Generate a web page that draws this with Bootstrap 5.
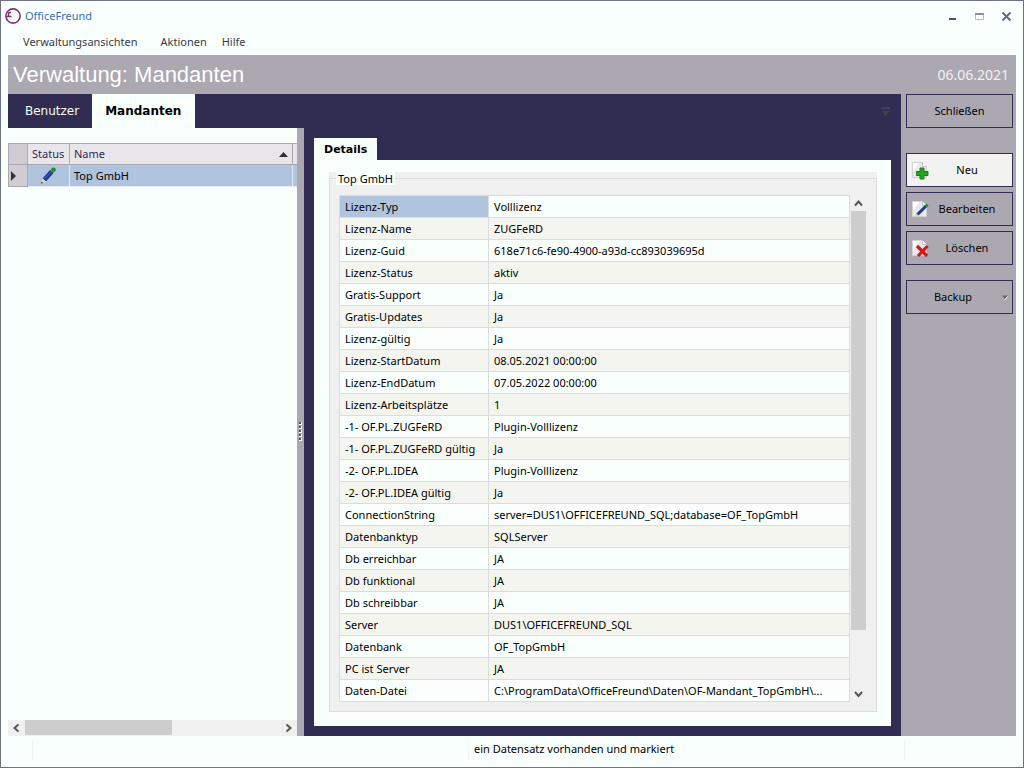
<!DOCTYPE html>
<html lang="de">
<head>
<meta charset="utf-8">
<meta name="viewport" content="width=device-width, initial-scale=1">
<title>OfficeFreund</title>
<link href="https://cdn.jsdelivr.net/npm/bootstrap@5.3.0/dist/css/bootstrap.min.css" rel="stylesheet">
<style>
:root { --paper:#f8fffd; --navy:#312c51; --steel:#aba8b2; --line:#dcdcdc; --face:#f0f0f0; --pick:#b0c4de; }
body { font-family:"Noto Sans","Open Sans",sans-serif; font-size:11px; line-height:16px; color:#000; background:var(--paper); }
.window { height:100vh; min-height:600px; border:1px solid #6f727e; padding:0 7px; }
.titlebar { height:30px; color:#3a6fb5; margin-left:-3px; padding-right:3px; }
.winbtn { border:0; background:none; padding:0; width:13px; height:13px; line-height:0; }
.menubar { height:24px; gap:23px; padding:0 0 2px 15px; }
.menubar a { color:#3b3b47; text-decoration:none; }
.menubar a:last-child { margin-left:-8px; }
.heading { height:39px; background:var(--steel); padding:0 7px 0 5px; }
.heading h1 { font:22px/39px "Liberation Sans",Arial,sans-serif; color:#fff; margin:0; }
.heading time { font-size:14px; color:#f0f0f0; }
.maintabs { background:var(--navy); height:34px; padding-right:11px; }
.tabbtn { border:0; border-radius:0; font-family:"DejaVu Sans",Verdana,sans-serif; font-size:12px; line-height:16px; height:34px; background:var(--navy); color:#f8fffd; padding:0 13px 0 17px; }
.tabbtn.current { background:var(--paper); color:#000; font-weight:bold; padding:0 14px 0 13px; }
.listpane { width:289px; padding-top:15px; }
.listgrid { table-layout:fixed; width:100%; border-collapse:separate; border-spacing:0; }
.listgrid th, .listgrid td { height:22px; padding:0 4px; font-weight:normal; white-space:nowrap; }
.listgrid th { background:#e9e6ea; color:#2d2850; border:solid var(--steel); border-width:1px 1px 1px 0; }
.listgrid tr > :first-child { background:#d0ccd2; border:solid var(--steel); border-width:0 1px 1px; }
.listgrid thead tr > :first-child { border-top-width:1px; }
.listgrid th:last-child { border-right:0; }
.listgrid td { background:var(--pick); border:solid #e6e6f6; border-width:0 1px 1px 0; }
.listgrid td:last-child { border-right:0; }
.splitter { width:7px; background:var(--steel); }
.grip { width:3px; height:3px; background:linear-gradient(#55505c,#55505c) 0 0/2px 2px no-repeat #fff; margin-bottom:1px; }
.sbar { background:var(--face); }
.sbar button { border:0; background:none; padding:0; width:17px; height:16px; line-height:0; flex:none; }
.sbar .thumb { background:#cdcdcd; }
.sbar.vert { width:17px; }
.detailpane { background:var(--navy); padding:10px; min-width:0; }
.subtab { border:0; align-self:flex-start; background:var(--paper); font-family:"DejaVu Sans",Verdana,sans-serif; font-size:11px; font-weight:bold; line-height:16px; height:22px; padding:2px 10px 0; }
.sheet { background:var(--paper); padding:12px 14px 14px 15px; min-height:0; }
.groupface { background:var(--face); min-height:0; }
.group { border:1px solid var(--line); padding:10px 9px 8px; min-height:0; height:100%; }
.group legend { float:none; width:auto; margin:0 0 0 -3px; background:var(--paper); font-size:11px; line-height:13px; padding:0 2px; }
.scrollwrap { overflow:hidden; min-width:0; }
.props { width:100%; table-layout:fixed; border-collapse:separate; border-spacing:0; border:solid var(--line); border-width:1px 0 0 1px; }
.props th, .props td { height:22px; padding:0 5px; font-weight:normal; white-space:nowrap; overflow:hidden; text-overflow:ellipsis; background:var(--paper); border:solid var(--line); border-width:0 1px 1px 0; }
.props th { padding-right:0; }
.props tr:nth-child(even) > * { background:#f5f5ef; }
.props tr:first-child th { background:var(--pick); }
.actions { width:115px; background:var(--steel); padding:0 3px 0 5px; }
.act { position:relative; width:107px; height:34px; border:1px solid var(--navy); border-radius:0; background:var(--steel); color:#000; font-size:11px; line-height:16px; padding:0; }
.act.hot { background:#f2f2f0; }
.act.pic { padding-left:15px; }
.act.pic svg { position:absolute; left:5px; top:8px; }
.actgroup { gap:5px; margin:25px 0 15px; }
.statusbar { height:31px; padding:5px 0 7px; }
.statusbar > div { border-left:1px solid #f1f3f3; }
</style>
</head>
<body>
<svg class="d-none">
  <defs>
    <symbol id="page" viewBox="0 0 17 17"><path d="M.5.5h10l4 4v11H.5z" fill="#e9e9ec" stroke="#d2d2d6"/><path d="M1 1h6L1 10z" fill="#fff"/><path d="M10.500.5v4h4" fill="#fafafa" stroke="#c2c2c8"/></symbol>
  </defs>
</svg>
<div class="window d-flex flex-column">
  <header class="titlebar d-flex align-items-center">
    <svg width="16" height="16" viewBox="0 0 16 16" fill="none" stroke="#81306f"><circle cx="8" cy="8" r="7.100" stroke-width="1.600"/><path d="M1.500 8.500h5M3.500 8V5.500q0-1 1-1H6" stroke-width="1.500"/></svg>
    <span class="ms-1 me-auto">OfficeFreund</span>
    <div class="d-flex" style="gap:14px">
      <button class="winbtn" aria-label="Minimieren"><svg width="13" height="13"><path d="M3 9h7" stroke="#4a5266" stroke-width="2"/></svg></button>
      <button class="winbtn" aria-label="Maximieren"><svg width="13" height="13"><path d="M2.500 4.500h8v5h-8z" fill="#fff" stroke="#b4b9c8"/><path d="M2 4h9" stroke="#8e8e98" stroke-width="2"/></svg></button>
      <button class="winbtn" aria-label="Schließen"><svg width="13" height="13"><path d="M2.500 2.500l8 8M10.500 2.500l-8 8" stroke="#626b86" stroke-width="2"/></svg></button>
    </div>
  </header>
  <nav class="menubar d-flex align-items-center">
    <a href="#">Verwaltungsansichten</a><a href="#">Aktionen</a><a href="#">Hilfe</a>
  </nav>
  <div class="heading d-flex justify-content-between align-items-center">
    <h1>Verwaltung: Mandanten</h1><time datetime="2021-06-06">06.06.2021</time>
  </div>
  <main class="d-flex flex-grow-1" style="min-height:0">
    <div class="d-flex flex-column flex-grow-1" style="min-width:0">
      <div class="maintabs d-flex align-items-center">
        <button class="tabbtn">Benutzer</button><button class="tabbtn current">Mandanten</button>
        <svg class="ms-auto" width="9" height="9" fill="#3f4146"><path d="M0 0h9v2H0zM0 4h9L4.500 9z"/></svg>
      </div>
      <div class="d-flex flex-grow-1" style="min-height:0">
        <section class="listpane d-flex flex-column flex-shrink-0">
          <table class="listgrid">
            <colgroup><col style="width:20px"><col style="width:42px"><col><col style="width:4px"></colgroup>
            <thead><tr><th></th><th>Status</th><th><span class="d-flex align-items-center justify-content-between">Name<svg width="9" height="5" fill="#333"><path d="M0 5h9L4.500 0z"/></svg></span></th><th class="p-0"></th></tr></thead>
            <tbody><tr>
              <td class="p-0"><svg class="d-block" width="8" height="10" fill="#333"><path d="M2 0v10l5-5z"/></svg></td>
              <td class="text-center"><svg class="d-block mx-auto" width="17" height="17"><path d="M2.500 11.500L10.500 2.500l3.500 3-8 9z" fill="#1b3c96"/><path d="M4.500 12L12 4" stroke="#4470c8" stroke-width="1"/><path d="M2.500 11.500l3.500 3L1.500 16z" fill="#e5dcae"/><path d="M1 16.500l.5-2 1.500 1.500z" fill="#333"/><path d="M10.500 2.500l3.500 3" stroke="#e9a21f" stroke-width="1.500"/><circle cx="13.500" cy="2.800" r="2.300" fill="#1d8a26"/></svg></td>
              <td>Top GmbH</td><td class="p-0"></td></tr></tbody>
          </table>
          <div class="sbar d-flex mt-auto">
            <button aria-label="Nach links"><svg width="17" height="16"><path d="M10.500 4.500L6.500 8l4 3.500" fill="none" stroke="#555" stroke-width="2"/></svg></button>
            <div class="flex-grow-1"><div class="thumb" style="width:57.600%;height:15px"></div></div>
            <button aria-label="Nach rechts"><svg width="17" height="16"><path d="M6.500 4.500l4 3.500-4 3.500" fill="none" stroke="#555" stroke-width="2"/></svg></button>
          </div>
        </section>
        <div class="splitter d-flex flex-column align-items-center justify-content-center flex-shrink-0">
          <i class="grip"></i><i class="grip"></i><i class="grip"></i><i class="grip"></i><i class="grip"></i>
        </div>
        <section class="detailpane d-flex flex-column flex-grow-1">
          <button class="subtab">Details</button>
          <div class="sheet flex-grow-1 d-flex flex-column">
            <div class="groupface flex-grow-1">
              <fieldset class="group">
                <legend>Top GmbH</legend>
                <div class="d-flex h-100">
                  <div class="scrollwrap flex-grow-1">
                    <table class="props">
                      <colgroup><col style="width:149px"><col></colgroup>
                      <tbody>
                      <tr><th>Lizenz-Typ</th><td>Volllizenz</td></tr>
                      <tr><th>Lizenz-Name</th><td>ZUGFeRD</td></tr>
                      <tr><th>Lizenz-Guid</th><td>618e71c6-fe90-4900-a93d-cc893039695d</td></tr>
                      <tr><th>Lizenz-Status</th><td>aktiv</td></tr>
                      <tr><th>Gratis-Support</th><td>Ja</td></tr>
                      <tr><th>Gratis-Updates</th><td>Ja</td></tr>
                      <tr><th>Lizenz-gültig</th><td>Ja</td></tr>
                      <tr><th>Lizenz-StartDatum</th><td>08.05.2021 00:00:00</td></tr>
                      <tr><th>Lizenz-EndDatum</th><td>07.05.2022 00:00:00</td></tr>
                      <tr><th>Lizenz-Arbeitsplätze</th><td>1</td></tr>
                      <tr><th>-1- OF.PL.ZUGFeRD</th><td>Plugin-Volllizenz</td></tr>
                      <tr><th>-1- OF.PL.ZUGFeRD gültig</th><td>Ja</td></tr>
                      <tr><th>-2- OF.PL.IDEA</th><td>Plugin-Volllizenz</td></tr>
                      <tr><th>-2- OF.PL.IDEA gültig</th><td>Ja</td></tr>
                      <tr><th>ConnectionString</th><td>server=DUS1\OFFICEFREUND_SQL;database=OF_TopGmbH</td></tr>
                      <tr><th>Datenbanktyp</th><td>SQLServer</td></tr>
                      <tr><th>Db erreichbar</th><td>JA</td></tr>
                      <tr><th>Db funktional</th><td>JA</td></tr>
                      <tr><th>Db schreibbar</th><td>JA</td></tr>
                      <tr><th>Server</th><td>DUS1\OFFICEFREUND_SQL</td></tr>
                      <tr><th>Datenbank</th><td>OF_TopGmbH</td></tr>
                      <tr><th>PC ist Server</th><td>JA</td></tr>
                      <tr><th>Daten-Datei</th><td>C:\ProgramData\OfficeFreund\Daten\OF-Mandant_TopGmbH\...</td></tr>
                      </tbody>
                    </table>
                  </div>
                  <div class="sbar vert d-flex flex-column">
                    <button aria-label="Nach oben"><svg width="17" height="16"><path d="M5 10.500l3.500-4 3.500 4" fill="none" stroke="#555" stroke-width="2"/></svg></button>
                    <div class="flex-grow-1"><div class="thumb" style="height:88%;margin:0 1px"></div></div>
                    <button aria-label="Nach unten"><svg width="17" height="16"><path d="M5 5l3.500 4 3.500-4" fill="none" stroke="#555" stroke-width="2"/></svg></button>
                  </div>
                </div>
              </fieldset>
            </div>
          </div>
        </section>
      </div>
    </div>
    <aside class="actions d-flex flex-column flex-shrink-0">
      <button class="act">Schließen</button>
      <div class="actgroup d-flex flex-column">
        <button class="act pic hot"><svg width="18" height="18"><use href="#page" width="17" height="17"/><path d="M8 6h4v3.500h4v4h-4V17H8v-3.500H4.500v-4H8z" fill="#22a522" stroke="#12801a"/></svg>Neu</button>
        <button class="act pic"><svg width="18" height="18"><use href="#page" width="17" height="17"/><path d="M5.500 13.500L14 5" stroke="#1b3c96" stroke-width="3"/><path d="M4 12.500l2.500 2.500L3 16.500z" fill="#d8cf9c"/><path d="M13.800 5.200l1.700-1.700" stroke="#2a8a26" stroke-width="3"/></svg>Bearbeiten</button>
        <button class="act pic"><svg width="18" height="18"><use href="#page" width="17" height="17"/><path d="M5 6l10 10M15.500 6L6 16" stroke="#d91515" stroke-width="3.200"/></svg>Löschen</button>
      </div>
      <button class="act" style="padding-right:13px">Backup<svg class="position-absolute" style="right:4px;top:14px" width="6" height="5"><path d="M0 .5h6L3 4z" fill="#666"/><path d="M3 4.500L5.500 1.500" stroke="#fff"/></svg></button>
    </aside>
  </main>
  <footer class="statusbar d-flex">
    <div class="ms-4" style="flex:0 1 436px"></div>
    <div class="flex-grow-1" style="padding-left:5px">ein Datensatz vorhanden und markiert</div>
    <div style="width:112px"></div>
  </footer>
</div>
<script src="https://cdn.jsdelivr.net/npm/bootstrap@5.3.0/dist/js/bootstrap.bundle.min.js"></script>
</body>
</html>
